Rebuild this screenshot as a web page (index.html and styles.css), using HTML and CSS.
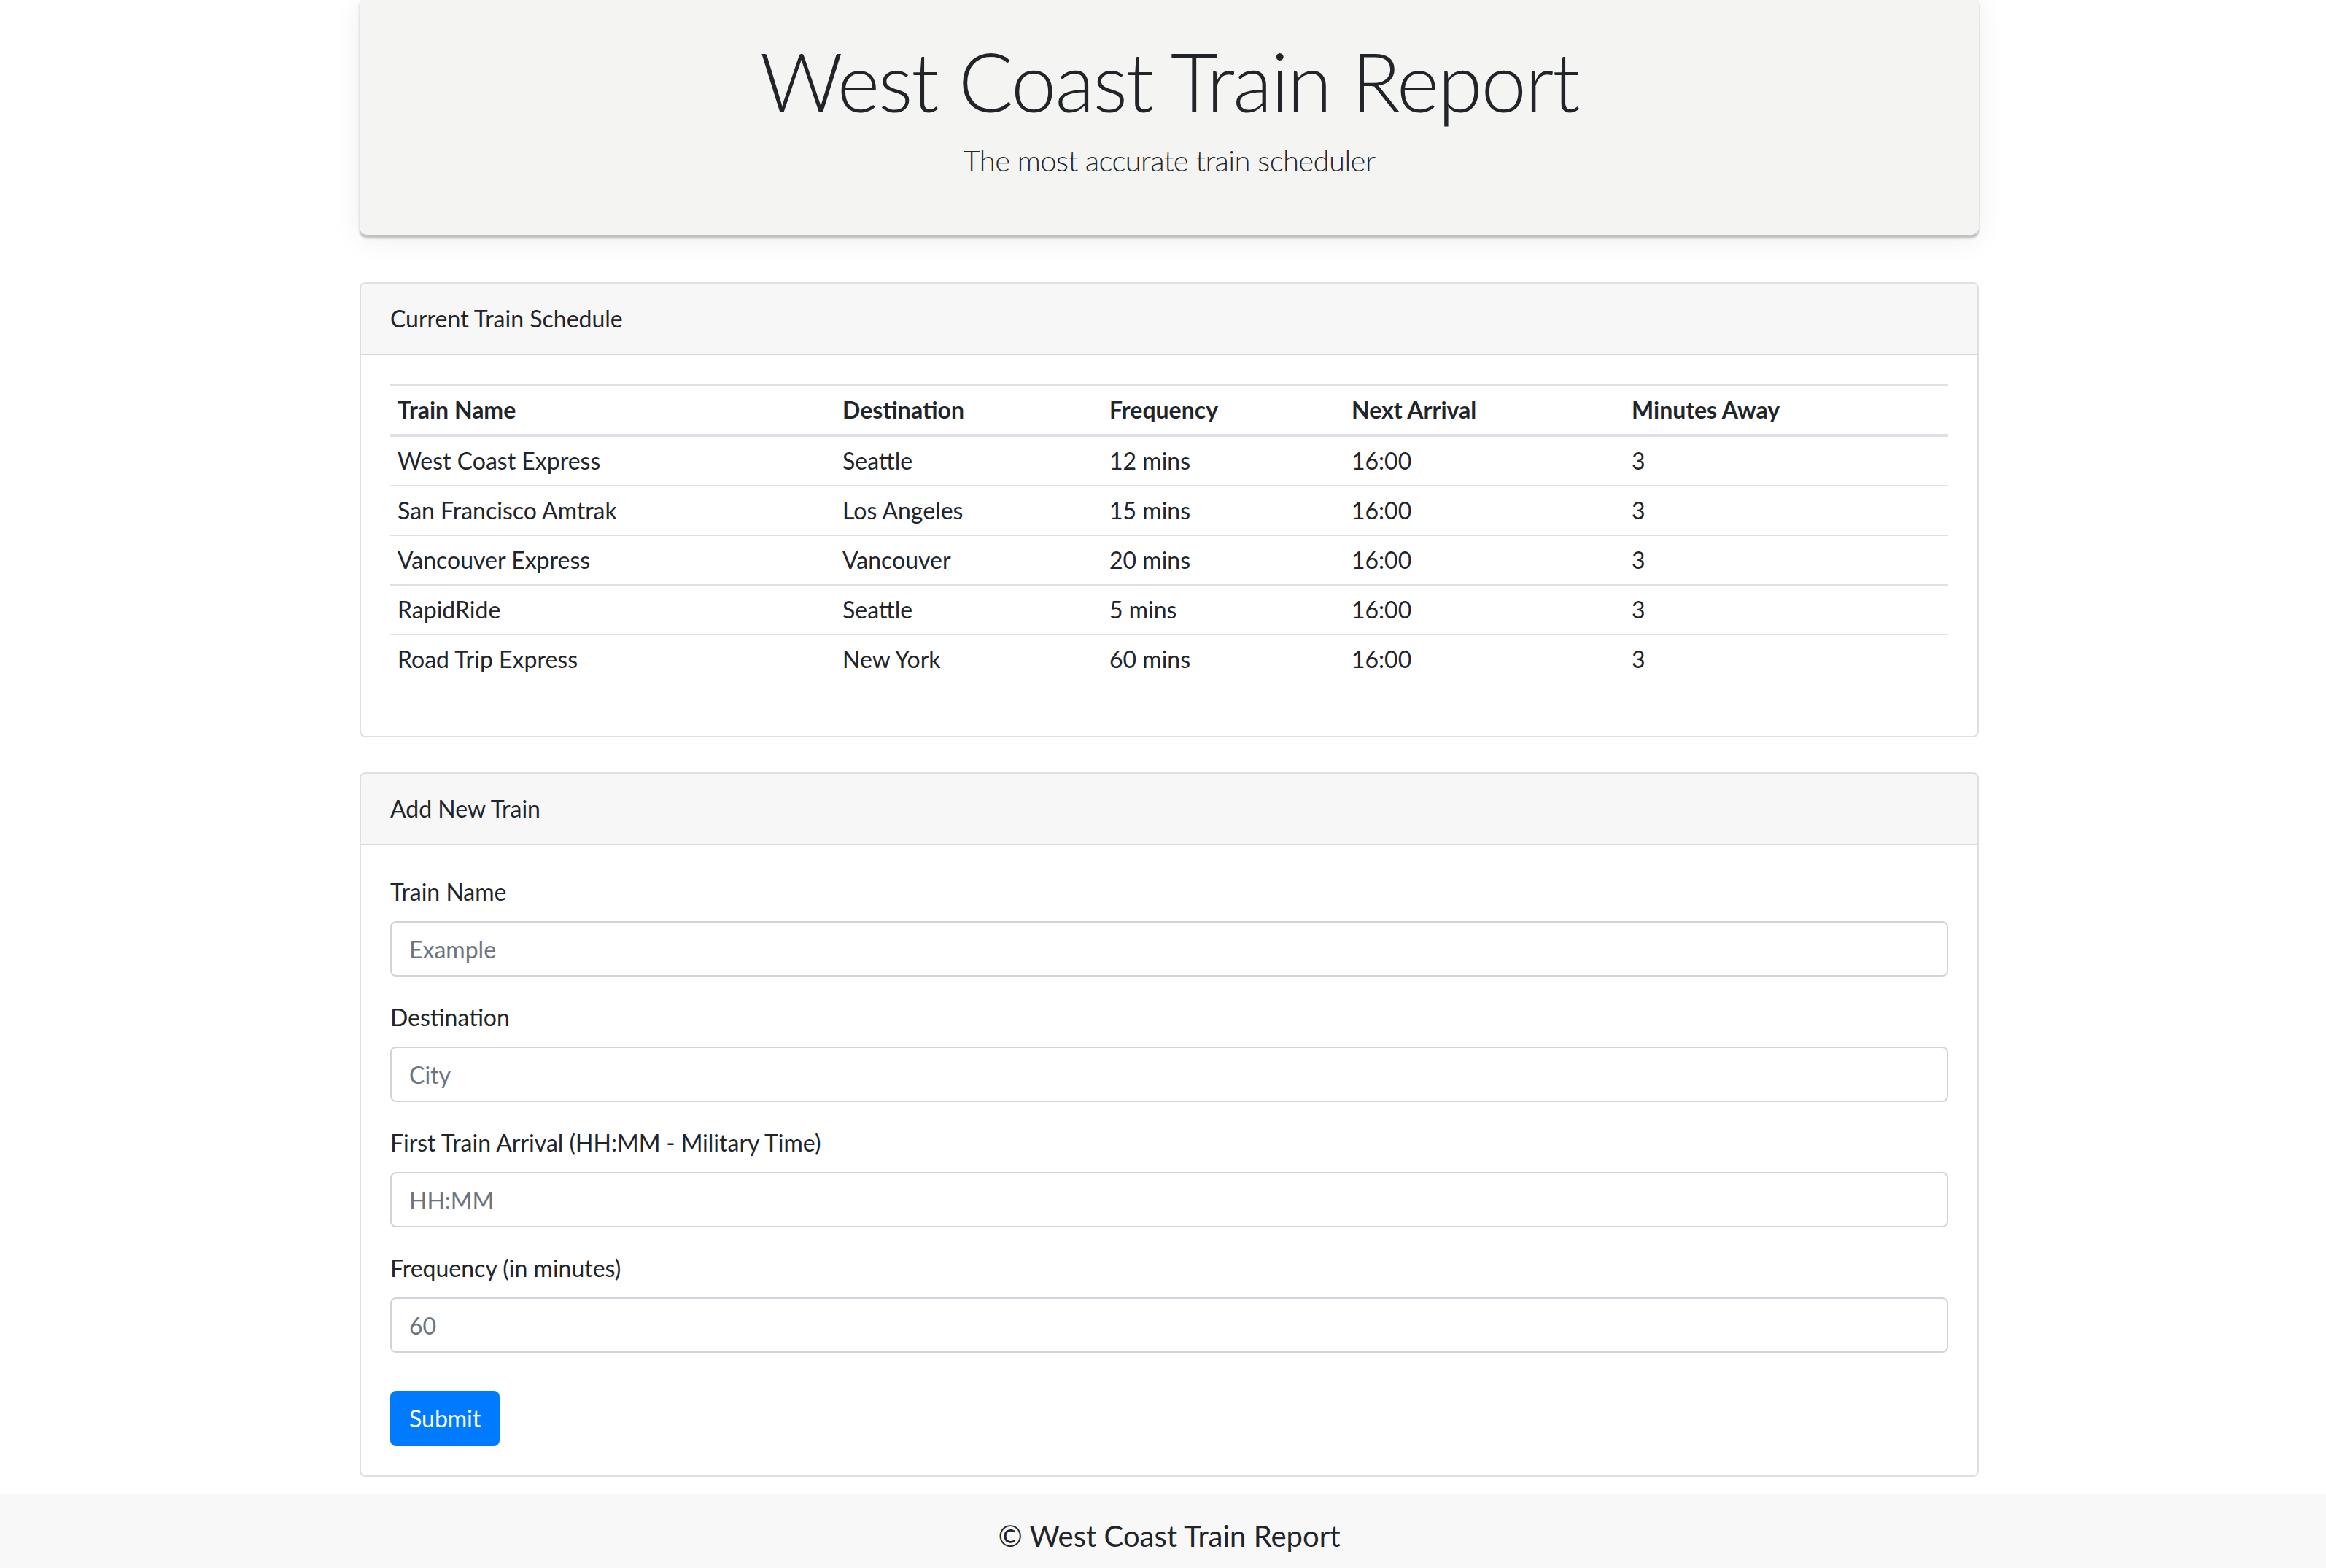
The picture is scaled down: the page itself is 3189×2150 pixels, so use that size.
FILE: index.html
```html
<!DOCTYPE html>
<html lang="en">
<head>
<meta charset="utf-8">
<title>West Coast Train Report</title>
<link rel="stylesheet" href="styles.css">
</head>
<body>
<div class="page">
  <div class="container">
    <header class="jumbotron">
      <h1 class="display">West Coast Train Report</h1>
      <p class="lead">The most accurate train scheduler</p>
    </header>

    <section class="card">
      <div class="card-header">Current Train Schedule</div>
      <div class="card-body">
        <table class="table">
          <colgroup>
            <col class="c1"><col class="c2"><col class="c3"><col class="c4"><col class="c5">
          </colgroup>
          <thead>
            <tr><th>Train Name</th><th>Destination</th><th>Frequency</th><th>Next Arrival</th><th>Minutes Away</th></tr>
          </thead>
          <tbody>
            <tr><td>West Coast Express</td><td>Seattle</td><td>12 mins</td><td>16:00</td><td>3</td></tr>
            <tr><td>San Francisco Amtrak</td><td>Los Angeles</td><td>15 mins</td><td>16:00</td><td>3</td></tr>
            <tr><td>Vancouver Express</td><td>Vancouver</td><td>20 mins</td><td>16:00</td><td>3</td></tr>
            <tr><td>RapidRide</td><td>Seattle</td><td>5 mins</td><td>16:00</td><td>3</td></tr>
            <tr><td>Road Trip Express</td><td>New York</td><td>60 mins</td><td>16:00</td><td>3</td></tr>
          </tbody>
        </table>
      </div>
    </section>

    <section class="card card-form">
      <div class="card-header">Add New Train</div>
      <div class="card-body">
        <form class="form">
          <div class="form-group">
            <label for="name">Train Name</label>
            <input id="name" class="form-control" type="text" placeholder="Example">
          </div>
          <div class="form-group">
            <label for="dest">Destination</label>
            <input id="dest" class="form-control" type="text" placeholder="City">
          </div>
          <div class="form-group">
            <label for="first">First Train Arrival (HH:MM - Military Time)</label>
            <input id="first" class="form-control" type="text" placeholder="HH:MM">
          </div>
          <div class="form-group">
            <label for="freq">Frequency (in minutes)</label>
            <input id="freq" class="form-control" type="text" placeholder="60">
          </div>
          <button type="button" class="btn">Submit</button>
        </form>
      </div>
    </section>
  </div>
</div>
<footer class="footer">© West Coast Train Report</footer>
</body>
</html>
```

FILE: styles.css
```css
* { box-sizing: border-box; }
html, body { margin: 0; padding: 0; }
body {
  font-family: "Lato", "Segoe UI", "Noto Sans", sans-serif;
  font-size: 32px;
  line-height: 1.5;
  color: #212529;
  background: #fff;
}
.page { padding-left: 17px; }
.container { width: 2220px; margin: 0 auto; }

.jumbotron {
  background: #f4f4f2;
  padding: 44px 64px 40px;
  text-align: center;
  border-radius: 0 0 10px 10px;
  box-shadow: 0 5px 3px rgba(0,0,0,0.22), 0 6px 40px rgba(0,0,0,0.07);
  margin-bottom: 65px;
}
.display {
  font-size: 112px;
  font-weight: 300;
  line-height: 1.2;
  letter-spacing: -2.2px;
  margin: 0 0 12px;
}
.lead {
  font-size: 40px;
  font-weight: 300;
  line-height: 1.5;
  letter-spacing: -0.6px;
  margin: 0 0 32px;
}

.card {
  border: 2px solid rgba(0,0,0,0.125);
  border-radius: 8px;
  background: #fff;
  overflow: hidden;
}
.card-form { margin-top: 48px; }
.card-header {
  background: #f7f7f7;
  padding: 24px 40px;
  border-bottom: 2px solid rgba(0,0,0,0.125);
}
.card-body { padding: 40px; }

.table {
  width: 100%;
  border-collapse: collapse;
  margin-bottom: 32px;
  table-layout: fixed;
}
.c1 { width: 610px; }
.c2 { width: 366px; }
.c3 { width: 332px; }
.c4 { width: 384px; }
.table th, .table td {
  text-align: left;
  padding: 9px 10px;
  border-top: 2px solid #dee2e6;
  vertical-align: top;
}
.table th { font-weight: 700; }
.table thead th { border-bottom: 4px solid #dee2e6; }
.table tbody tr:first-child td { border-top: 0; }

.form-group { margin-bottom: 32px; }
.form-group label { display: block; margin-bottom: 16px; }
.form-control {
  display: block;
  width: 100%;
  height: 76px;
  padding: 12px 24px;
  font: inherit;
  color: #495057;
  background: #fff;
  border: 2px solid #ced4da;
  border-radius: 8px;
}
.form-control::placeholder { color: #6c757d; opacity: 1; }

.btn {
  margin-top: 20px;
  font: inherit;
  color: #fff;
  background: #007bff;
  border: 2px solid #007bff;
  border-radius: 8px;
  padding: 12px 24px;
  line-height: 1.5;
  height: 76px;
}

.footer {
  margin-top: 24px;
  background: #f8f8f8;
  text-align: center;
  font-size: 40px;
  line-height: 1.5;
  padding: 27px 0 40px 17px;
}
```
